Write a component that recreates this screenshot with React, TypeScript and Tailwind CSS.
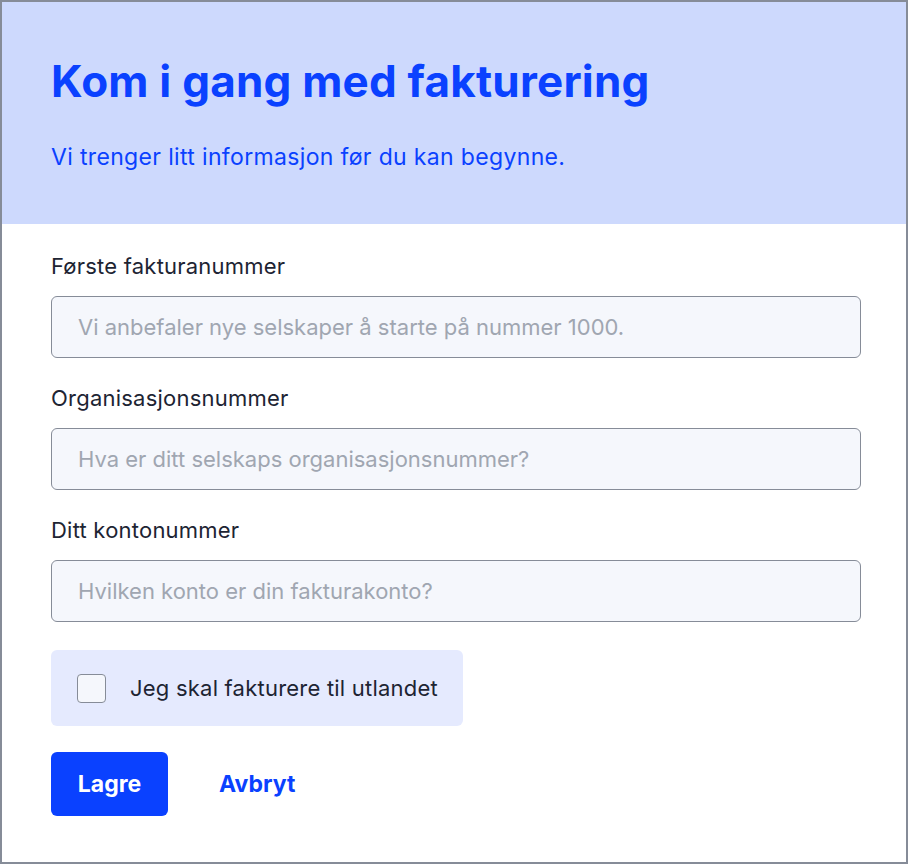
import React, { useState } from 'react';

const fields = [
  { label: 'Første fakturanummer', placeholder: 'Vi anbefaler nye selskaper å starte på nummer 1000.' },
  { label: 'Organisasjonsnummer', placeholder: 'Hva er ditt selskaps organisasjonsnummer?' },
  { label: 'Ditt kontonummer', placeholder: 'Hvilken konto er din fakturakonto?' },
];

export default function App() {
  const [abroad, setAbroad] = useState(false);

  return (
    <div className="h-[864px] w-[908px] border-2 border-[#868c98] bg-white font-['Inter',sans-serif]">
      <div className="h-[222px] bg-[#cdd9fd] pl-[49px] pr-[45px] pt-[53px]">
        <h1 className="text-[44px] font-bold leading-[52px] tracking-[0.005em] text-[#0a41ff]">Kom i gang med fakturering</h1>
        <p className="mt-[36px] text-[23px] leading-[28px] tracking-[0.015em] text-[#0a41ff]">Vi trenger litt informasjon før du kan begynne.</p>
      </div>

      <div className="flex flex-col pl-[49px] pr-[45px] pt-[28px]">
        {fields.map((f) => (
          <div key={f.label} className="mb-[26px] flex flex-col">
            <label className="text-[22px] leading-[28px] tracking-[0.01em] text-[#1d2433]">{f.label}</label>
            <input
              placeholder={f.placeholder}
              className="mt-[16px] h-[62px] w-full rounded-[6px] border border-[#868c98] bg-[#f5f7fc] px-[26px] text-[22px] text-[#1d2433] outline-none placeholder:text-[#a0a6b1]"
            />
          </div>
        ))}

        <label className="mt-[2px] flex h-[76px] w-[412px] cursor-pointer items-center gap-[24px] rounded-[6px] bg-[#e5eafe] px-[26px]">
          <input
            type="checkbox"
            checked={abroad}
            onChange={(e) => setAbroad(e.target.checked)}
            className="h-[29px] w-[29px] shrink-0 appearance-none rounded-[4px] border border-[#868c98] bg-[#f5f7fc]"
          />
          <span className="whitespace-nowrap text-[22px] tracking-[0.01em] text-[#1d2433]">Jeg skal fakturere til utlandet</span>
        </label>

        <div className="mt-[26px] flex items-center gap-[51px]">
          <button className="h-[64px] w-[117px] rounded-[6px] bg-[#0a41ff] text-[23px] font-bold text-white">Lagre</button>
          <button className="text-[23px] font-bold text-[#0a41ff]">Avbryt</button>
        </div>
      </div>
    </div>
  );
}
